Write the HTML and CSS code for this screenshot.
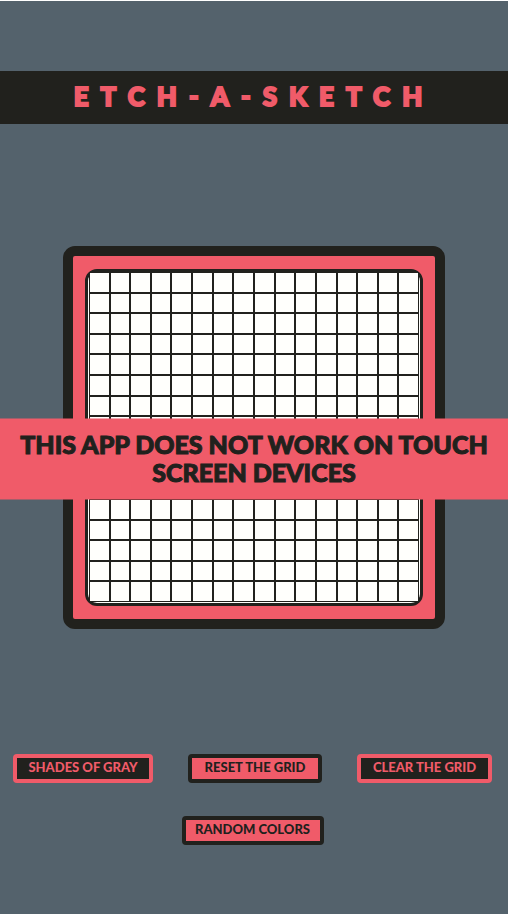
FILE: index.html
```html
<!DOCTYPE html>
<html lang="en">
<head>
  <meta charset="utf-8">
  <meta name="viewport" content="width=device-width, initial-scale=1">
  <title>Etch-a-Sketch</title>
  <link rel="stylesheet" href="styles.css">
</head>
<body>
  <header class="header"><h1 class="title">ETCH-A-SKETCH</h1></header>
  <main class="main">
    <div class="frame"><div class="screen"><div class="grid" id="grid"></div></div></div>
  </main>
  <div class="controls">
    <button type="button" class="btn btn-dark btn-gray">SHADES OF GRAY</button>
    <button type="button" class="btn btn-reset">RESET THE GRID</button>
    <button type="button" class="btn btn-dark btn-clear">CLEAR THE GRID</button>
    <button type="button" class="btn btn-random">RANDOM COLORS</button>
  </div>
  <p class="notice">THIS APP DOES NOT WORK ON TOUCH SCREEN DEVICES</p>
  <script src="script.js"></script>
</body>
</html>
```
FILE: styles.css
```css
* {
  box-sizing: border-box;
}

html {
  background: #fff;
}

body {
  position: relative;
  display: flex;
  flex-direction: column;
  justify-content: space-between;
  min-height: calc(100vh - 1px);
  margin: 1px 0 0;
  padding: 70px 0 69px;
  background: #54626c;
  font-family: Lato, "Liberation Sans", sans-serif;
  font-weight: 900;
  color: #21211d;
}

.header {
  padding: 9px 0 11px;
  background: #21211d;
  text-align: center;
}

.title {
  margin: 0;
  font-size: 26px;
  font-weight: 900;
  line-height: 33px;
  letter-spacing: 12px;
  color: #f05b69;
  -webkit-text-stroke: 2px #f05b69;
}

.main {
  display: flex;
  justify-content: center;
  margin-bottom: 3px;
}

.frame {
  padding: 13px 12px;
  border: 10px solid #21211d;
  border-radius: 12px;
  background: #f05b69;
}

.screen {
  padding: 0 1px 1px;
  border: 3px solid #21211d;
  border-radius: 12px;
  background: #fffffc;
}

.grid {
  display: grid;
  grid-template-columns: repeat(16, 1fr);
  grid-template-rows: repeat(16, 1fr);
  width: 65vw;
  aspect-ratio: 1;
}

.cell {
  border: 1px solid #21211d;
  background: #fffffc;
}

.notice {
  position: absolute;
  top: calc(50% + 1px);
  left: 0;
  width: 100%;
  margin: 0;
  padding: 11px 16px 14px;
  transform: translateY(-50%);
  background: #f05b69;
  font-size: 25px;
  line-height: 28px;
  text-align: center;
  -webkit-text-stroke: 1px #21211d;
}

.controls {
  display: flex;
  flex-wrap: wrap;
  justify-content: center;
  gap: 33px 35px;
  padding: 0 3px 0 0;
}

.btn {
  height: 29px;
  padding: 0 0 2px;
  border: 4px solid #21211d;
  border-radius: 4px;
  background: #f05b69;
  color: #21211d;
  font: 900 13px/19px Lato, "Liberation Sans", sans-serif;
}

.btn-dark {
  border-color: #f05b69;
  background: #21211d;
  color: #f05b69;
}

.btn-gray {
  min-width: 140px;
}

.btn-reset {
  min-width: 134px;
}

.btn-clear {
  min-width: 135px;
}

.btn-random {
  min-width: 142px;
}
```
FILE: script.js
```js
const grid = document.getElementById("grid");
for (let i = 0; i < 16 * 16; i++) {
  const cell = document.createElement("div");
  cell.className = "cell";
  grid.appendChild(cell);
}
```
